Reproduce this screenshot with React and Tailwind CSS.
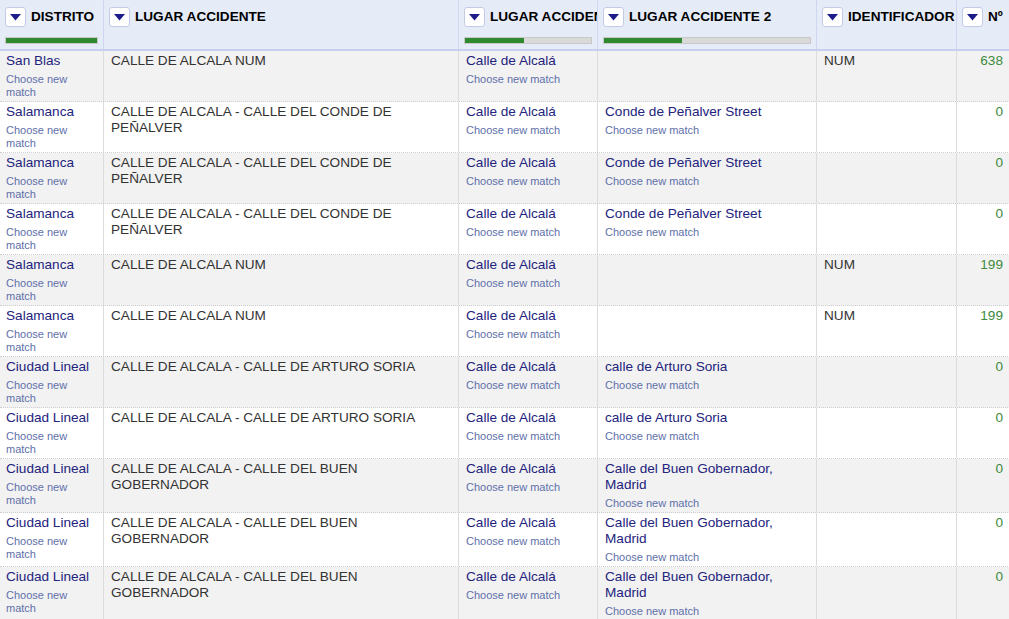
import React from "react";

const COLS = [
  { key: "d", title: "DISTRITO", w: "w-[104px]", bar: 100 },
  { key: "l", title: "LUGAR ACCIDENTE", w: "w-[355px]", bar: null },
  { key: "l1", title: "LUGAR ACCIDENTE 1", w: "w-[139px]", bar: 47 },
  { key: "l2", title: "LUGAR ACCIDENTE 2", w: "w-[219px]", bar: 38 },
  { key: "id", title: "IDENTIFICADOR", w: "w-[140px]", bar: null },
  { key: "n", title: "Nº", w: "w-[53px]", bar: null },
];

const CONDE = ["CALLE DE ALCALA - CALLE DEL CONDE DE", "PEÑALVER"];
const BUEN = ["CALLE DE ALCALA - CALLE DEL BUEN", "GOBERNADOR"];

const ROWS = [
  { d: "San Blas", l: ["CALLE DE ALCALA NUM"], l2: null, id: "NUM", n: "638" },
  { d: "Salamanca", l: CONDE, l2: ["Conde de Peñalver Street"], id: "", n: "0" },
  { d: "Salamanca", l: CONDE, l2: ["Conde de Peñalver Street"], id: "", n: "0" },
  { d: "Salamanca", l: CONDE, l2: ["Conde de Peñalver Street"], id: "", n: "0" },
  { d: "Salamanca", l: ["CALLE DE ALCALA NUM"], l2: null, id: "NUM", n: "199" },
  { d: "Salamanca", l: ["CALLE DE ALCALA NUM"], l2: null, id: "NUM", n: "199" },
  { d: "Ciudad Lineal", l: ["CALLE DE ALCALA - CALLE DE ARTURO SORIA"], l2: ["calle de Arturo Soria"], id: "", n: "0" },
  { d: "Ciudad Lineal", l: ["CALLE DE ALCALA - CALLE DE ARTURO SORIA"], l2: ["calle de Arturo Soria"], id: "", n: "0" },
  { d: "Ciudad Lineal", l: BUEN, l2: ["Calle del Buen Gobernador,", "Madrid"], id: "", n: "0" },
  { d: "Ciudad Lineal", l: BUEN, l2: ["Calle del Buen Gobernador,", "Madrid"], id: "", n: "0" },
  { d: "Ciudad Lineal", l: BUEN, l2: ["Calle del Buen Gobernador,", "Madrid"], id: "", n: "0" },
];

function DropBtn() {
  return (
    <div className="w-[21px] h-[20px] shrink-0 rounded-[3px] bg-white border border-[#c4cbe6] flex items-center justify-center">
      <svg width="11" height="7" viewBox="0 0 11 7">
        <polygon points="0,0 11,0 5.5,6.5" fill="#1d1d8a" />
      </svg>
    </div>
  );
}

function Header() {
  return (
    <div className="flex h-[51px] bg-[#e6ebf8] border-b-2 border-[#c6d0ee]">
      {COLS.map((c) => (
        <div key={c.key} className={`${c.w} shrink-0 border-r border-[#cfd7f0] pl-[5px] pr-[5px] pt-[7px] overflow-hidden`}>
          <div className="flex items-center gap-[5px] h-[20px] whitespace-nowrap">
            <DropBtn />
            <span className="font-bold text-[13.6px] text-black">{c.title}</span>
          </div>
          {c.bar !== null && (
            <div className="mt-[10px] h-[7px] bg-[#d9d9d9] border border-[#c8c8c8] flex">
              <div className="h-full bg-[#2f8a2f]" style={{ width: `${c.bar}%` }} />
            </div>
          )}
        </div>
      ))}
    </div>
  );
}

function Recon({ lines, chooseLines }) {
  return (
    <div>
      {lines.map((t, i) => (
        <div key={i} className="text-[13.6px] leading-[16px] text-[#23237d] whitespace-nowrap">{t}</div>
      ))}
      <div className="mt-[4px]">
        {chooseLines.map((t, i) => (
          <div key={i} className="text-[11px] leading-[13px] text-[#6070aa] whitespace-nowrap">{t}</div>
        ))}
      </div>
    </div>
  );
}

function Row({ r, i }) {
  const bg = i % 2 === 0 ? "bg-[#f2f2f2]" : "bg-white";
  const cell = "shrink-0 border-r border-[#dcdcdc] pl-[6px] pr-[6px] pt-[2px] pb-[2px] overflow-hidden";
  return (
    <div className={`flex ${bg} border-b border-dotted border-[#cfcfcf]`}>
      <div className={`${COLS[0].w} ${cell}`}>
        <Recon lines={[r.d]} chooseLines={["Choose new", "match"]} />
      </div>
      <div className={`${COLS[1].w} ${cell} pl-[7px]`}>
        {r.l.map((t, k) => (
          <div key={k} className="text-[13.6px] leading-[16px] text-[#333333] whitespace-nowrap">{t}</div>
        ))}
      </div>
      <div className={`${COLS[2].w} ${cell} pl-[7px]`}>
        <Recon lines={["Calle de Alcalá"]} chooseLines={["Choose new match"]} />
      </div>
      <div className={`${COLS[3].w} ${cell} pl-[7px]`}>
        {r.l2 && <Recon lines={r.l2} chooseLines={["Choose new match"]} />}
      </div>
      <div className={`${COLS[4].w} ${cell} pl-[7px]`}>
        <div className="text-[13.6px] leading-[16px] text-[#333333]">{r.id}</div>
      </div>
      <div className={`${COLS[5].w} ${cell} text-right`}>
        <div className="text-[13.6px] leading-[16px] text-[#3d8b3d]">{r.n}</div>
      </div>
    </div>
  );
}

export default function App() {
  return (
    <div className="w-[1009px] h-[619px] overflow-hidden bg-white" style={{ fontFamily: '"Liberation Sans", Arial, sans-serif' }}>
      <div className="w-[1010px]">
        <Header />
        {ROWS.map((r, i) => (
          <Row key={i} r={r} i={i} />
        ))}
      </div>
    </div>
  );
}
